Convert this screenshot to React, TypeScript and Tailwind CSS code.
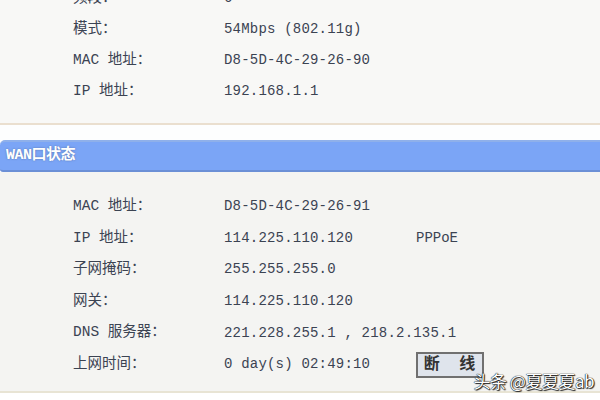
import React from 'react';

const lanRows = [
  { label: '频段：', value: '6' },
  { label: '模式：', value: '54Mbps (802.11g)' },
  { label: 'MAC 地址：', value: 'D8-5D-4C-29-26-90' },
  { label: 'IP 地址：', value: '192.168.1.1' },
];

const wanRows = [
  { label: 'MAC 地址：', value: 'D8-5D-4C-29-26-91' },
  { label: 'IP 地址：', value: '114.225.110.120', extra: 'PPPoE' },
  { label: '子网掩码：', value: '255.255.255.0' },
  { label: '网关：', value: '114.225.110.120' },
  { label: 'DNS 服务器：', value: '221.228.255.1 , 218.2.135.1' },
  { label: '上网时间：', value: '0 day(s) 02:49:10', button: '断 线' },
];

const font = "font-['Liberation_Mono','Noto_Sans_CJK_SC',monospace]";

type Row = { label: string; value: string; extra?: string; button?: string };

const StatusRow: React.FC<{ row: Row; h: string }> = ({ row, h }) => (
  <div className={`flex items-center ${h} text-[14px] text-[#3b4352]`}>
    <div className="w-[151px] pl-[73px] box-content shrink-0 whitespace-nowrap text-[14.5px]">{row.label}</div>
    <div className="w-[192px] shrink-0 whitespace-nowrap tracking-[0.2px]">{row.value}</div>
    {row.extra && <div className="whitespace-nowrap">{row.extra}</div>}
    {row.button && (
      <div className="w-[68px] h-[26px] flex items-center justify-center border-2 border-[#707070] bg-[#dfe4ec] text-[16px] font-bold text-[#333] tracking-[5px] pl-[4px]">
        {row.button}
      </div>
    )}
  </div>
);

export default function App() {
  return (
    <div className={`relative w-[600px] h-[400px] overflow-hidden bg-white ${font}`}>
      {/* LAN status (cut off at top) */}
      <div className="h-[125px] bg-[#f8f8f6] border-b-2 border-[#eadfcf] overflow-hidden">
        <div className="-mt-[17px]">
          {lanRows.map((r) => (
            <StatusRow key={r.label} row={r} h="h-[31px]" />
          ))}
        </div>
      </div>

      <div className="h-[15px] bg-[#fdfefe]" />

      {/* WAN header */}
      <div className="h-[32px] flex items-center pl-[6px] bg-[#7ba5f6] border-t-2 border-b-2 border-t-[#8fb0ea] border-b-[#6b8fd6] rounded-tl-[5px] rounded-bl-[3px]">
        <span className="text-[15px] text-white font-bold tracking-[-0.5px] [text-shadow:0_0_2px_#5571a8]">WAN口状态</span>
      </div>

      {/* WAN status */}
      <div className="h-[221px] bg-[#f4f4f2] pt-[19px] border-b-2 border-[#e8e4d4]">
        {wanRows.map((r) => (
          <StatusRow key={r.label} row={r} h="h-[31.6px]" />
        ))}
      </div>

      <div className="absolute right-[6px] bottom-[7px] text-[17px] text-white font-['Noto_Sans_CJK_SC',sans-serif] [text-shadow:0_0_1px_#000,0_0_1px_#000,1px_1px_1px_#222] tracking-[-0.5px]">
        头条 @夏夏夏ab
      </div>
    </div>
  );
}
